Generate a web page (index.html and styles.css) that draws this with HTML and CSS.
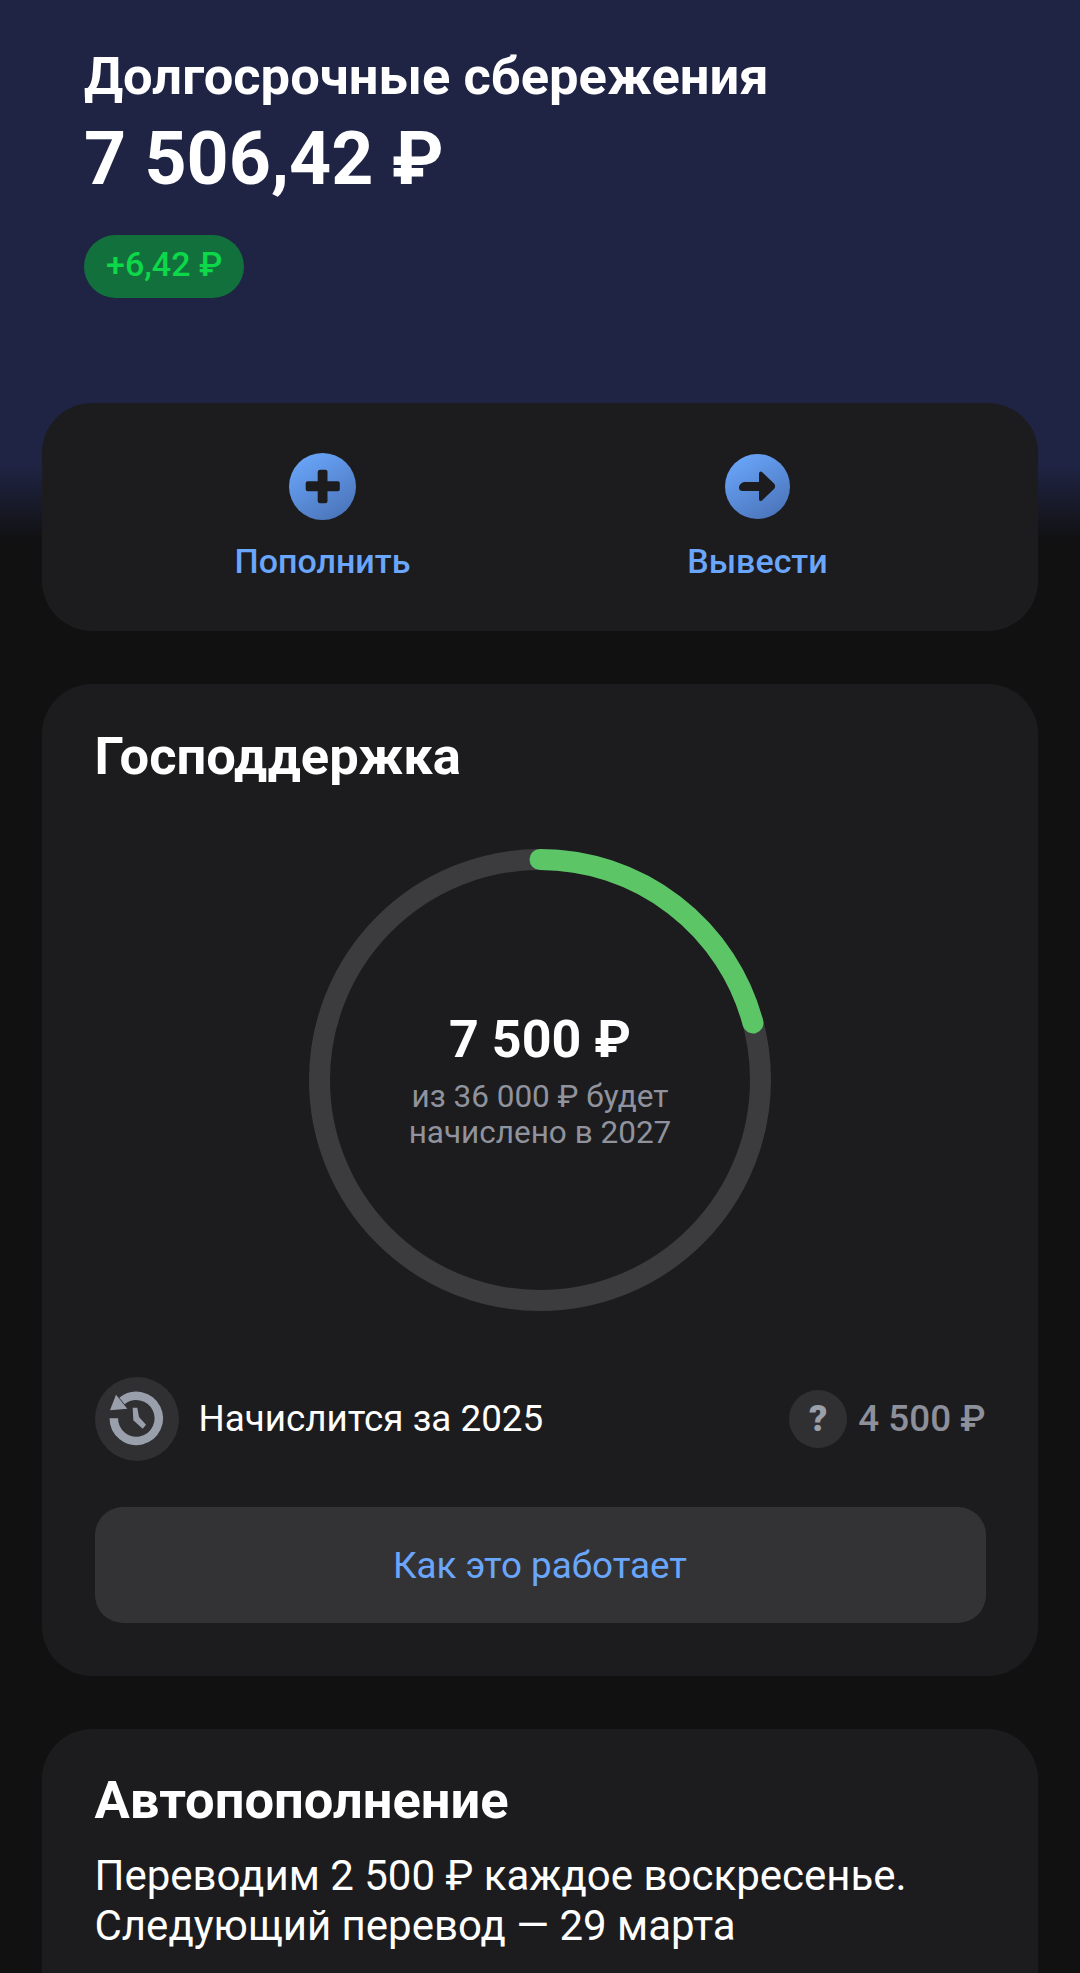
FILE: index.html
```html
<!DOCTYPE html>
<html lang="ru">
<head>
<meta charset="utf-8">
<title>Долгосрочные сбережения</title>
<link rel="stylesheet" href="styles.css">
</head>
<body>
<div class="page">
  <header class="hero">
    <h1 class="hero-title">Долгосрочные сбережения</h1>
    <div class="hero-amount">7 506,42 ₽</div>
    <span class="badge">+6,42 ₽</span>
  </header>
  <main class="cards">
    <section class="card actions">
      <a class="action">
        <svg class="action-icon plus" viewBox="0 0 67 67"><defs><linearGradient id="g1" x1="0.2" y1="0" x2="0.8" y2="1"><stop offset="0" stop-color="#6aa6fb"/><stop offset="1" stop-color="#4a73b8"/></linearGradient></defs><circle cx="33.500" cy="33.500" r="33.500" fill="url(#g1)"/><path d="M31.500 16.700h5a2 2 0 0 1 2 2v9.600h10.300a2 2 0 0 1 2 2v6a2 2 0 0 1-2 2H38.500v10a2 2 0 0 1-2 2h-5a2.500 2.500 0 0 1-2.800-2v-10H18.700a2 2 0 0 1-2-2v-6a2 2 0 0 1 2-2h10v-9.600a2.500 2.500 0 0 1 2.800-2z" fill="#1c1c1e"/></svg>
        <span class="action-label">Пополнить</span>
      </a>
      <a class="action">
        <svg class="action-icon arrow" viewBox="0 0 65 65"><defs><linearGradient id="g2" x1="0.2" y1="0" x2="0.8" y2="1"><stop offset="0" stop-color="#6aa6fb"/><stop offset="1" stop-color="#4a73b8"/></linearGradient></defs><circle cx="32.500" cy="32.500" r="32.500" fill="url(#g2)"/><path d="M14 33.500c0-3 3-5.500 6-5.500h14v-8c0-2.500 1.500-3.300 3-2l12 11.500c1.500 1.500 1.500 4 0 5.500L37 46.500c-1.500 1.300-3 .5-3-2V37H18c-3 0-4-1-4-3.500z" fill="#1c1c1e"/></svg>
        <span class="action-label action-label-tight">Вывести</span>
      </a>
    </section>

    <section class="card support">
      <h2 class="card-title">Господдержка</h2>
      <div class="ring">
        <svg class="ring-svg" viewBox="0 0 462 462">
          <circle cx="231" cy="231" r="220.500" fill="none" stroke="#3c3c3e" stroke-width="21"/>
          <path d="M231 10.500A220.500 220.500 0 0 1 444 174" fill="none" stroke="#5cc566" stroke-width="21" stroke-linecap="round"/>
        </svg>
        <div class="ring-text">
          <div class="ring-amount">7 500 ₽</div>
          <div class="ring-note">из 36 000 ₽ будет<br>начислено в 2027</div>
        </div>
      </div>
      <div class="accrual">
        <span class="round-icon history">
          <svg viewBox="0 0 84 84" class="history-svg"><path d="M27 24A22.500 22.500 0 1 1 18.800 41.300" fill="none" stroke="#9aa0ab" stroke-width="8.500"/><path d="M21 17.700L15 33.300l17.300-1.600z" fill="#9aa0ab"/><path d="M37.700 30.700h4.600L44 40l7 7.700-3.300 4-9.400-8.400z" fill="#9aa0ab"/></svg>
        </span>
        <span class="accrual-label">Начислится за 2025</span>
        <span class="round-icon question">?</span>
        <span class="accrual-value">4 500 ₽</span>
      </div>
      <button class="how-button">Как это работает</button>
    </section>

    <section class="card auto">
      <h2 class="card-title">Автопополнение</h2>
      <p class="auto-text">Переводим 2 500 ₽ каждое воскресенье.<br>Следующий перевод — 29 марта</p>
    </section>
  </main>
</div>
</body>
</html>
```
FILE: styles.css
```css
* { box-sizing: border-box; }
html, body { margin: 0; padding: 0; height: 1973px; overflow: hidden; }
body {
  font-family: Roboto, "Noto Sans", sans-serif;
  color: #fff;
  background: linear-gradient(to bottom, #1f2444 0, #1f2444 465px, #111112 540px, #111112 100%);
}
.page { width: 1080px; }
.hero { height: 403px; padding: 47px 84px 0; display: flex; flex-direction: column; align-items: flex-start; }
.hero-title { margin: 0; font-size: 52.5px; line-height: 58px; font-weight: 700; }
.hero-amount { margin-top: 10px; font-size: 73.5px; line-height: 88px; font-weight: 700; }
.badge {
  margin-top: 32px; height: 63px; padding: 0 22px; border-radius: 32px;
  background: #12703c; color: #0cd849;
  font-size: 34px; font-weight: 500; line-height: 58px;
}
.cards { padding: 0 42px; display: flex; flex-direction: column; gap: 53px; }
.card { background: #1c1c1e; border-radius: 50px; }
.actions { height: 228px; padding-top: 50px; display: grid; grid-template-columns: 435px 435px; justify-content: center; align-items: start; }
.action { display: flex; flex-direction: column; align-items: center; }
.action + .action { padding-top: 1px; }
.action-icon { display: block; }
.plus { width: 67px; height: 67px; }
.arrow { width: 65px; height: 65px; }
.action-label { margin-top: 21px; font-size: 34px; line-height: 40px; font-weight: 500; color: #6aa6fb; white-space: nowrap; }
.action-label-tight { margin-top: 22px; }
.support { height: 992px; padding: 41px 52.500px 0; }
.card-title { margin: 0; font-size: 52.5px; line-height: 62px; font-weight: 700; }
.ring { display: grid; width: 462px; height: 462px; margin: 62px auto 0; place-items: center; }
.ring-svg, .ring-text { grid-area: 1 / 1; }
.ring-svg { width: 462px; height: 462px; display: block; overflow: visible; }
.ring-text { text-align: center; }
.ring-amount { font-size: 52px; line-height: 62px; font-weight: 700; }
.ring-note { margin-top: 8px; font-size: 31.500px; line-height: 36px; color: #90939d; }
.accrual { display: flex; align-items: center; margin-top: 66px; height: 84px; }
.round-icon { display: flex; align-items: center; justify-content: center; border-radius: 50%; background: #303033; flex: none; }
.history { width: 84px; height: 84px; }
.history-svg { width: 84px; height: 84px; display: block; }
.accrual-label { margin-left: 20px; flex: 1; font-size: 36.800px; line-height: 44px; }
.question { width: 58px; height: 58px; color: #9a9fa9; font-size: 36px; font-weight: 900; }
.accrual-value { margin-left: 11px; font-size: 36.800px; line-height: 44px; font-weight: 500; color: #8d909a; }
.how-button {
  display: block; width: 100%; height: 116px; margin-top: 46px; border: 0; border-radius: 28px;
  background: #333336; color: #6aa6fb; font-family: inherit; font-size: 36.800px;
}
.auto { height: 400px; padding: 36px 52.500px 0; }
.auto .card-title { margin-top: 4px; }
.auto-text { margin: 20px 0 0; font-size: 42px; line-height: 50px; color: #fff; }
```
